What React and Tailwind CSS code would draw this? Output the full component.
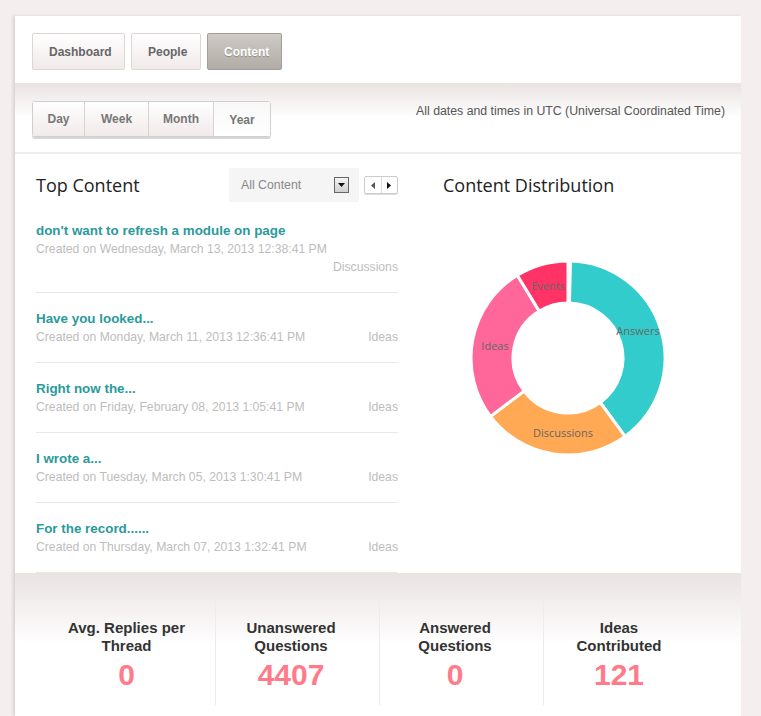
import React from 'react';

const items = [
  { title: "don't want to refresh a module on page", date: 'Created on Wednesday, March 13, 2013 12:38:41 PM', type: 'Discussions' },
  { title: 'Have you looked...', date: 'Created on Monday, March 11, 2013 12:36:41 PM', type: 'Ideas' },
  { title: 'Right now the...', date: 'Created on Friday, February 08, 2013 1:05:41 PM', type: 'Ideas' },
  { title: 'I wrote a...', date: 'Created on Tuesday, March 05, 2013 1:30:41 PM', type: 'Ideas' },
  { title: 'For the record......', date: 'Created on Thursday, March 07, 2013 1:32:41 PM', type: 'Ideas' },
];

const stats = [
  { label: ['Avg. Replies per', 'Thread'], value: '0' },
  { label: ['Unanswered', 'Questions'], value: '4407' },
  { label: ['Answered', 'Questions'], value: '0' },
  { label: ['Ideas', 'Contributed'], value: '121' },
];

// donut slices, degrees clockwise from 12 o'clock
const slices = [
  { from: 1.5, to: 144, color: '#33cccc' },
  { from: 144, to: 233, color: '#ffa955' },
  { from: 233, to: 328.5, color: '#ff6699' },
  { from: 328.5, to: 360, color: '#ff3366' },
];

const pt = (cx, cy, r, deg) => {
  const a = ((deg - 90) * Math.PI) / 180;
  return [cx + r * Math.cos(a), cy + r * Math.sin(a)];
};

const arc = (cx, cy, r1, r2, from, to) => {
  const large = to - from > 180 ? 1 : 0;
  const [x1, y1] = pt(cx, cy, r2, from);
  const [x2, y2] = pt(cx, cy, r2, to);
  const [x3, y3] = pt(cx, cy, r1, to);
  const [x4, y4] = pt(cx, cy, r1, from);
  return `M${x1} ${y1} A${r2} ${r2} 0 ${large} 1 ${x2} ${y2} L${x3} ${y3} A${r1} ${r1} 0 ${large} 0 ${x4} ${y4} Z`;
};

const Donut = () => (
  <svg width="230" height="230" viewBox="0 0 230 230">
    {slices.map((s, i) => (
      <path key={i} d={arc(115, 115, 55, 97, s.from, s.to)} fill={s.color} stroke="#fff" strokeWidth="3" strokeLinejoin="miter" />
    ))}
    <g fontFamily="'Open Sans', sans-serif" fontSize="11" fill="#666" textAnchor="middle">
      <text x="95" y="47">Events</text>
      <text x="185" y="92">Answers</text>
      <text x="42" y="107">Ideas</text>
      <text x="110" y="194">Discussions</text>
    </g>
  </svg>
);

const navBtn = 'h-[37px] px-4 rounded-[2px] border text-[12px] font-bold';

export default function App() {
  return (
    <div className="min-h-screen bg-[#f4efee] pt-4 pl-[15px] pr-5 font-['Liberation_Sans',Arial,sans-serif]">
      <div className="bg-white shadow-[-2px_0_3px_rgba(0,0,0,0.12)]">
        {/* top nav */}
        <div className="h-[67px] pt-[17px] pl-[17px] flex gap-[6px]">
          <button className={`${navBtn} w-[93px] border-[#ddd6d4] bg-gradient-to-b from-white to-[#f1eae9] text-[#666]`}>Dashboard</button>
          <button className={`${navBtn} w-[70px] border-[#ddd6d4] bg-gradient-to-b from-white to-[#f1eae9] text-[#666]`}>People</button>
          <button className={`${navBtn} w-[75px] border-[#a39d98] bg-gradient-to-b from-[#d0cac6] to-[#b2aca7] text-white [text-shadow:0_1px_1px_rgba(0,0,0,0.25)]`}>Content</button>
        </div>

        {/* range band */}
        <div className="h-[71px] bg-gradient-to-b from-[#e9e3e1] via-white to-white border-b-2 border-[#eeeeee] flex justify-between pl-[17px] pr-4 pt-[18px]">
          <div className="flex h-[36px] border border-[#cfcfcf] rounded-[3px] shadow-[0_2px_0_#d6d6d6] text-[12px] font-bold text-[#777]">
            <div className="w-[52px] flex items-center justify-center bg-gradient-to-b from-white to-[#f1eae9] border-r border-[#d4d4d4]">Day</div>
            <div className="w-[64px] flex items-center justify-center bg-gradient-to-b from-white to-[#f1eae9] border-r border-[#d4d4d4]">Week</div>
            <div className="w-[65px] flex items-center justify-center bg-gradient-to-b from-white to-[#f1eae9] border-r border-[#d4d4d4]">Month</div>
            <div className="w-[56px] flex items-center justify-center pt-[2px] bg-gradient-to-b from-[#f8f8f8] to-white">Year</div>
          </div>
          <div className="text-[12.3px] text-[#555] pt-[1px]">All dates and times in UTC (Universal Coordinated Time)</div>
        </div>

        {/* content */}
        <div className="h-[419px] flex pl-[21px] pt-[14px]">
          <div className="w-[362px]">
            <div className="h-[34px] flex items-center">
              <h2 className="font-['Open_Sans',sans-serif] text-[18px] text-[#222] flex-1">Top Content</h2>
              <div className="w-[130px] h-[34px] bg-[#f5f5f5] flex items-center pl-3 pr-[10px] text-[12.3px] text-[#888]">
                <span className="flex-1">All Content</span>
                <span className="w-[15px] h-[16px] border border-[#666] bg-gradient-to-b from-[#f4f4f4] to-[#cfcfcf] flex items-center justify-center">
                  <svg width="7" height="4" viewBox="0 0 7 4"><path d="M0 0h7L3.5 4z" fill="#111" /></svg>
                </span>
              </div>
              <div className="ml-[5px] w-[34px] h-[18px] border border-[#ccc] rounded-[2px] flex shadow-[0_1px_0_#ddd]">
                <span className="flex-1 flex items-center justify-center border-r border-[#ddd]">
                  <svg width="4" height="7" viewBox="0 0 4 7"><path d="M4 0v7L0 3.5z" fill="#555" /></svg>
                </span>
                <span className="flex-1 flex items-center justify-center">
                  <svg width="4" height="7" viewBox="0 0 4 7"><path d="M0 0v7l4-3.5z" fill="#111" /></svg>
                </span>
              </div>
            </div>
            <div className="mt-[3px]">
              {items.map((it, i) => (
                <div key={i} className="pt-[17px] pb-[16px] border-b border-[#e8e8e8]">
                  <div className="text-[13.4px] leading-[18px] font-bold text-[#2a9a9a]">{it.title}</div>
                  <div className="flex flex-wrap justify-between gap-x-4 text-[12.2px] leading-[18px] text-[#bdbdbd]">
                    <span>{it.date}</span>
                    <span className="ml-auto">{it.type}</span>
                  </div>
                </div>
              ))}
            </div>
          </div>
          <div className="ml-[45px] flex flex-col">
            <h2 className="h-[34px] flex items-center font-['Open_Sans',sans-serif] text-[18px] text-[#222]">Content Distribution</h2>
            <div className="mt-[41px] ml-[10px]">
              <Donut />
            </div>
          </div>
        </div>

        {/* stats */}
        <div className="h-[143px] bg-gradient-to-b from-[#e9e3e1] via-white to-white pt-[26px] pl-9">
          <div className="flex">
            {stats.map((s, i) => (
              <div key={i} className={`w-[164px] h-[106px] pt-[20px] pr-[13px] text-center ${i > 0 ? 'border-l border-[#ececec]' : ''}`}>
                <div className="text-[15px] leading-[18px] font-bold text-[#333]">
                  {s.label[0]}
                  <br />
                  {s.label[1]}
                </div>
                <div className="mt-[3px] text-[30px] leading-[34px] font-bold text-[#ff7b8a]">{s.value}</div>
              </div>
            ))}
          </div>
        </div>
      </div>
    </div>
  );
}
